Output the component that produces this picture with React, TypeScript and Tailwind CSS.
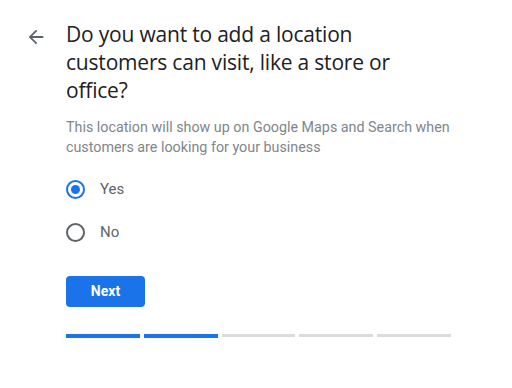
import React from "react";

const steps = [true, true, false, false, false];

export default function App() {
  const [choice, setChoice] = React.useState("yes");

  return (
    <div className="w-[512px] h-[388px] bg-white flex pt-5 font-['Roboto',sans-serif]">
      <div className="w-[66px] flex justify-end pr-[19px] pt-[6px] shrink-0">
        <svg width="22" height="22" viewBox="0 0 24 24" className="text-[#5f6368]">
          <path fill="currentColor" d="M20 11H7.83l5.59-5.59L12 4l-8 8 8 8 1.41-1.41L7.83 13H20v-2z" />
        </svg>
      </div>
      <div className="w-[385px] flex flex-col">
        <h1 className="text-[21px] leading-[28px] tracking-[-0.2px] text-[#202124] font-['Open_Sans',sans-serif] font-normal">
          Do you want to add a location customers can visit, like a store or office?
        </h1>
        <p className="mt-[13px] text-[14.3px] leading-5 text-[#80868b]">
          This location will show up on Google Maps and Search when customers are looking for your business
        </p>
        <div className="mt-[22px] flex flex-col gap-[23px]">
          {[
            { id: "yes", label: "Yes" },
            { id: "no", label: "No" },
          ].map((o) => (
            <label key={o.id} className="h-5 flex items-center cursor-pointer" onClick={() => setChoice(o.id)}>
              <span
                className={
                  choice === o.id
                    ? "w-[19px] h-[19px] rounded-full border-2 border-[#1a73e8] flex items-center justify-center"
                    : "w-[19px] h-[19px] rounded-full border-2 border-[#5f6368]"
                }
              >
                {choice === o.id && <span className="w-[9px] h-[9px] rounded-full bg-[#1a73e8]" />}
              </span>
              <span className="ml-[15px] text-[15px] text-[#5f6368]">{o.label}</span>
            </label>
          ))}
        </div>
        <button className="mt-[34px] w-[79px] h-[31px] rounded bg-[#1a73e8] text-white text-[14px] font-bold">
          Next
        </button>
        <div className="mt-[27px] flex gap-1 items-start">
          {steps.map((done, i) => (
            <div key={i} className={done ? "flex-1 h-1 bg-[#1a73e8]" : "flex-1 h-[3px] bg-[#dadce0]"} />
          ))}
        </div>
      </div>
    </div>
  );
}
